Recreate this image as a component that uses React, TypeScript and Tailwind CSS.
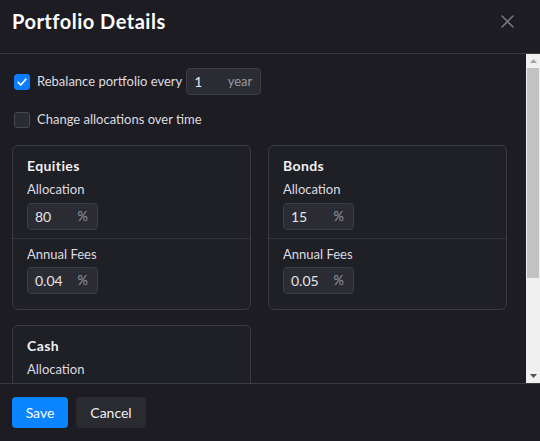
import React, { useState } from 'react';

const font = { fontFamily: 'Lato, "Noto Sans", sans-serif' };

const Check: React.FC<{ checked: boolean; onChange: () => void }> = ({ checked, onChange }) => (
  <button
    onClick={onChange}
    className={`w-4 h-4 rounded-[3px] flex items-center justify-center shrink-0 border ${
      checked ? 'bg-[#0a7cff] border-[#0a7cff]' : 'bg-[#2a2b33] border-[#46474f]'
    }`}
  >
    {checked && (
      <svg width="12" height="12" viewBox="0 0 12 12" fill="none">
        <path d="M2.2 6.4 L4.8 9 L9.8 3.2" stroke="white" strokeWidth="1.7" strokeLinecap="round" strokeLinejoin="round" />
      </svg>
    )}
  </button>
);

const UnitInput: React.FC<{ value: string; unit: string; width: string }> = ({ value, unit, width }) => (
  <div
    className={`${width} h-[27px] bg-[#2a2b33] border border-[#3c3d45] rounded-[4px] flex items-center justify-between pl-[7px] pr-[9px]`}
  >
    <span className="text-[14px] text-[#e4e4e8]">{value}</span>
    <span className="text-[13px] text-[#9a9aa2]">{unit}</span>
  </div>
);

type Asset = { name: string; allocation: string; fees: string };

const AssetCard: React.FC<{ asset: Asset }> = ({ asset }) => (
  <div className="border border-[#3a3b42] rounded-[6px] bg-[#1f1f26]">
    <div className="px-[14px] pt-[10px] pb-[8px]">
      <div className="text-[14px] font-bold leading-[20px] tracking-[0.4px] text-[#f0f0f2]">{asset.name}</div>
      <div className="mt-[4px] text-[13px] leading-[18px] text-[#dcdce0]">Allocation</div>
      <div className="mt-[5px]">
        <UnitInput value={asset.allocation} unit="%" width="w-[71px]" />
      </div>
    </div>
    <div className="border-t border-[#34353c] px-[14px] pt-[6px] pb-[15px]">
      <div className="text-[13px] leading-[18px] text-[#dcdce0]">Annual Fees</div>
      <div className="mt-[4px]">
        <UnitInput value={asset.fees} unit="%" width="w-[71px]" />
      </div>
    </div>
  </div>
);

const Scrollbar: React.FC = () => (
  <div className="w-[14px] shrink-0 bg-[#f0f0f0] flex flex-col">
    <div className="h-[14px] flex items-center justify-center">
      <svg width="7" height="4" viewBox="0 0 7 4">
        <path d="M0 4 L3.5 0 L7 4 Z" fill="#a3a3a3" />
      </svg>
    </div>
    <div className="flex-1 px-[1px]">
      <div className="h-[210px] bg-[#c2c2c2]" />
    </div>
    <div className="h-[14px] flex items-center justify-center">
      <svg width="7" height="4" viewBox="0 0 7 4">
        <path d="M0 0 L7 0 L3.5 4 Z" fill="#505050" />
      </svg>
    </div>
  </div>
);

export default function App() {
  const [rebalance, setRebalance] = useState(true);
  const [changeOverTime, setChangeOverTime] = useState(false);

  const assets: Asset[] = [
    { name: 'Equities', allocation: '80', fees: '0.04' },
    { name: 'Bonds', allocation: '15', fees: '0.05' },
    { name: 'Cash', allocation: '5', fees: '0.00' },
  ];

  return (
    <div style={font} className="w-[540px] h-[441px] bg-[#1c1c22] flex flex-col text-[#e6e6ea] overflow-hidden">
      {/* Header */}
      <div className="h-[54px] shrink-0 border-b border-[#3a3a41] flex justify-between items-start pl-3 pr-[26px] pt-[8px]">
        <h1 className="text-[20px] leading-[26px] font-bold tracking-[0.5px] text-white">Portfolio Details</h1>
        <button className="mt-[7px]">
          <svg width="13" height="13" viewBox="0 0 13 13" fill="none">
            <path d="M1 1 L12 12 M12 1 L1 12" stroke="#74747c" strokeWidth="1.6" strokeLinecap="round" />
          </svg>
        </button>
      </div>

      {/* Body */}
      <div className="flex-1 min-h-0 flex">
        <div className="flex-1 overflow-hidden pl-3 pt-[14px]">
          <div className="flex items-center h-[27px] pl-[2px]">
            <Check checked={rebalance} onChange={() => setRebalance(!rebalance)} />
            <span className="ml-[7px] text-[13px] text-[#dcdce0]">Rebalance portfolio every</span>
            <div className="ml-[4px] w-[75px] h-[27px] bg-[#2a2b33] border border-[#3c3d45] rounded-[4px] flex items-center justify-between pl-[7px] pr-[8px]">
              <span className="text-[14px] text-[#e4e4e8]">1</span>
              <span className="text-[13px] text-[#9a9aa2]">year</span>
            </div>
          </div>
          <div className="flex items-center h-[16px] mt-[17px] pl-[2px]">
            <Check checked={changeOverTime} onChange={() => setChangeOverTime(!changeOverTime)} />
            <span className="ml-[7px] text-[13px] text-[#dcdce0]">Change allocations over time</span>
          </div>

          <div className="mt-[17px] grid grid-cols-[239px_239px] gap-x-[17px] gap-y-[15px]">
            {assets.map((a) => (
              <AssetCard key={a.name} asset={a} />
            ))}
          </div>
        </div>
        <Scrollbar />
      </div>

      {/* Footer */}
      <div className="h-[58px] shrink-0 border-t border-[#3a3a41] flex items-center gap-2 px-3">
        <button className="w-[56px] h-[31px] rounded-[4px] bg-[#0a84ff] text-white text-[14px] leading-[31px]">Save</button>
        <button className="w-[70px] h-[31px] rounded-[4px] bg-[#2a2a31] text-[#f0f0f2] text-[14px] leading-[31px]">Cancel</button>
      </div>
    </div>
  );
}
